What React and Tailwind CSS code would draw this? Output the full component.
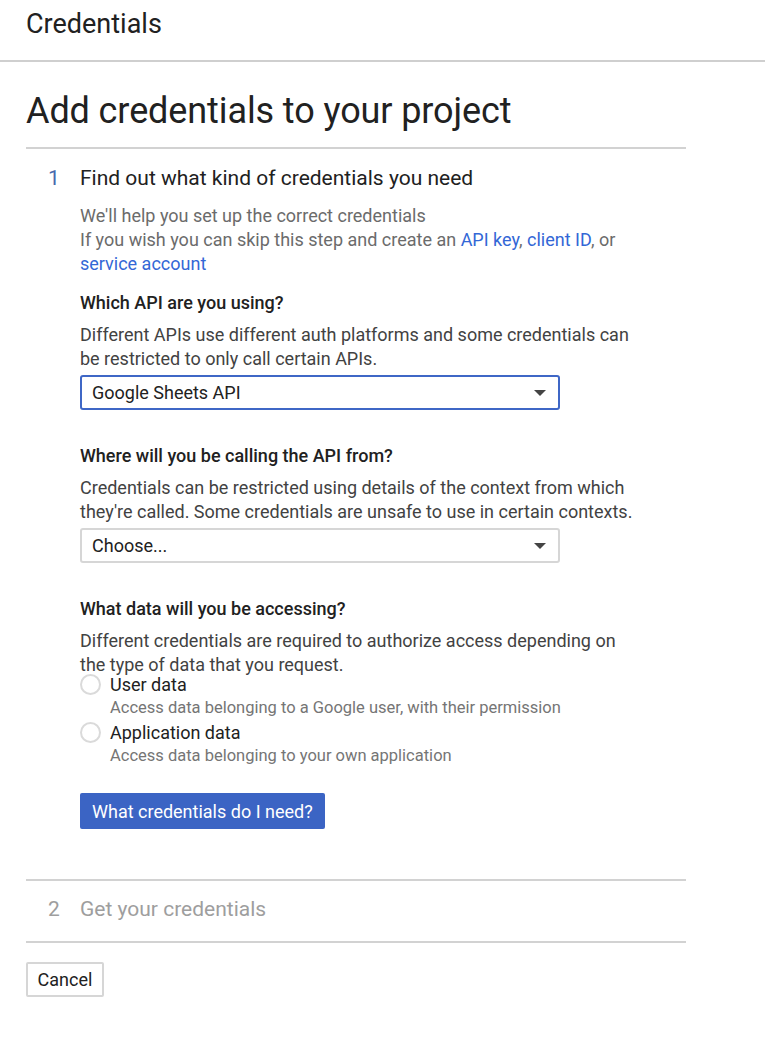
import React, { useState } from 'react';

const Caret = () => (
    <svg width="12" height="6" viewBox="0 0 12 6" className="shrink-0">
        <path d="M0 0 L12 0 L6 6 Z" fill="#444" />
    </svg>
);

const Select = ({ value, focused }) => (
    <div
        className={`mt-[4px] w-[480px] h-[35px] flex items-center justify-between pl-[10px] pr-[12px] rounded-[3px] border-2 bg-white text-[18px] text-[#212121] ${
            focused ? 'border-[#3f67c6]' : 'border-[#d6d6d6]'
        }`}
    >
        <span>{value}</span>
        <Caret />
    </div>
);

const Radio = ({ label, hint, checked, onClick }) => (
    <div className="flex flex-col">
        <button onClick={onClick} className="flex items-center h-[24px] text-left">
            <span className="w-[21px] h-[21px] rounded-full border-2 border-[#dadada] mr-[9px] flex items-center justify-center">
                {checked && <span className="w-[9px] h-[9px] rounded-full bg-[#3f67c6]" />}
            </span>
            <span className="text-[18px] text-[#212121]">{label}</span>
        </button>
        <div className="pl-[30px] h-[24px] leading-[24px] text-[16.5px] text-[#757575]">{hint}</div>
    </div>
);

const App = () => {
    const [dataType, setDataType] = useState(null);

    return (
        <div className="min-h-[1052px] bg-white font-['Roboto',sans-serif] text-[#212121]">
            {/* Top bar */}
            <header className="h-[62px] border-b-2 border-[#cfcfcf] px-[26px] pt-[6px]">
                <h1 className="text-[27px] leading-[36px]">Credentials</h1>
            </header>

            <main className="px-[26px]">
                <h2 className="mt-[27px] text-[36px] leading-[44px] tracking-[-0.1px]">Add credentials to your project</h2>

                <div className="w-[660px] mt-[14px] border-t-2 border-[#d2d2d2]">
                    {/* Step 1 */}
                    <div className="pt-[16px] pb-[50px]">
                        <div className="flex items-center h-[28px] text-[21px]">
                            <span className="w-[54px] pl-[22px] text-[#4a69ad]">1</span>
                            <span>Find out what kind of credentials you need</span>
                        </div>

                        <div className="pl-[54px]">
                            <p className="mt-[11px] text-[18px] leading-[24px] text-[#6b6b6b]">
                                We'll help you set up the correct credentials
                                <br />
                                If you wish you can skip this step and create an{' '}
                                <a className="text-[#3367d6]">API key</a>,{' '}
                                <a className="text-[#3367d6]">client ID</a>, or
                                <br />
                                <a className="text-[#3367d6]">service account</a>
                            </p>

                            <h3 className="mt-[15px] text-[18px] leading-[24px] font-medium">Which API are you using?</h3>
                            <p className="mt-[8px] w-[556px] text-[18px] leading-[24px] text-[#424242]">
                                Different APIs use different auth platforms and some credentials can be restricted to only call certain APIs.
                            </p>
                            <Select value="Google Sheets API" focused />

                            <h3 className="mt-[34px] text-[18px] leading-[24px] font-medium">Where will you be calling the API from?</h3>
                            <p className="mt-[8px] w-[556px] text-[18px] leading-[24px] text-[#424242]">
                                Credentials can be restricted using details of the context from which they're called. Some credentials are unsafe to use in certain contexts.
                            </p>
                            <Select value="Choose..." />

                            <h3 className="mt-[34px] text-[18px] leading-[24px] font-medium">What data will you be accessing?</h3>
                            <p className="mt-[8px] w-[556px] text-[18px] leading-[24px] text-[#424242]">
                                Different credentials are required to authorize access depending on the type of data that you request.
                            </p>
                            <div className="-mt-[5px]">
                                <Radio
                                    label="User data"
                                    hint="Access data belonging to a Google user, with their permission"
                                    checked={dataType === 'user'}
                                    onClick={() => setDataType('user')}
                                />
                                <Radio
                                    label="Application data"
                                    hint="Access data belonging to your own application"
                                    checked={dataType === 'app'}
                                    onClick={() => setDataType('app')}
                                />
                            </div>

                            <button className="mt-[25px] h-[36px] px-[12px] rounded-[2px] bg-[#3b64c4] text-white text-[18px]">
                                What credentials do I need?
                            </button>
                        </div>
                    </div>

                    {/* Step 2 */}
                    <div className="border-t-2 border-[#d2d2d2] pt-[15px] pb-[17px]">
                        <div className="flex items-center h-[28px] text-[21px] text-[#9e9e9e]">
                            <span className="w-[54px] pl-[22px]">2</span>
                            <span>Get your credentials</span>
                        </div>
                    </div>
                    <div className="border-t-2 border-[#d2d2d2]" />
                </div>

                <button className="mt-[19px] h-[35px] w-[78px] rounded-[2px] border-2 border-[#d6d6d6] bg-white text-[18px] text-[#212121]">
                    Cancel
                </button>
            </main>
        </div>
    );
};

export default App;
